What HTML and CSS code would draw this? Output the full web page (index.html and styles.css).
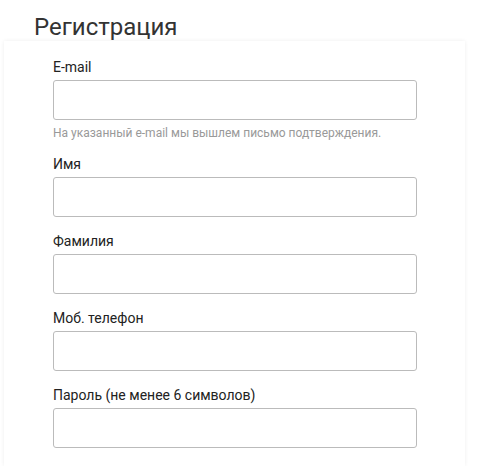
FILE: index.html
```html
<!DOCTYPE html>
<html lang="ru">
<head>
  <meta charset="UTF-8">
  <title>Регистрация</title>
  <link rel="stylesheet" href="styles.css">
</head>
<body>

  <div class="page">
    <h1 class="title">Регистрация</h1>

    <form class="card" id="regForm">
      <div class="form-group">
        <label for="email">E-mail</label>
        <input type="text" id="email" name="email">
        <p class="hint">На указанный e-mail мы вышлем письмо подтверждения.</p>
      </div>

      <div class="form-group">
        <label for="name">Имя</label>
        <input type="text" id="name" name="name">
      </div>

      <div class="form-group">
        <label for="surname">Фамилия</label>
        <input type="text" id="surname" name="surname">
      </div>

      <div class="form-group">
        <label for="phone">Моб. телефон</label>
        <input type="text" id="phone" name="phone">
      </div>

      <div class="form-group">
        <label for="password">Пароль (не менее 6 символов)</label>
        <input type="password" id="password" name="password">
      </div>
    </form>
  </div>

</body>
</html>
```

FILE: styles.css
```css
body {
  font-family: Roboto, 'Liberation Sans', sans-serif;
  background-color: #fff;
  margin: 0;
  padding: 0;
}

.page {
  padding: 14px 28px 0 4px;
}

.title {
  margin: 0 0 1px 30px;
  font-size: 24px;
  line-height: 26px;
  font-weight: normal;
  color: #333;
}

.card {
  background-color: #fff;
  padding: 18px 48px 2px 49px;
  box-shadow: 0 0 4px rgba(0, 0, 0, 0.07);
}

.form-group {
  margin-bottom: 16px;
}

label {
  display: block;
  font-size: 14px;
  line-height: 17px;
  color: #222;
  margin-bottom: 4px;
}

input[type="text"], input[type="password"] {
  display: block;
  box-sizing: border-box;
  width: 364px;
  height: 40px;
  margin: 0;
  padding: 6px 10px;
  border: 1px solid #bbb;
  border-radius: 3px;
  background-color: #fff;
  font-family: inherit;
  font-size: 14px;
}

.hint {
  margin: 6px 0 -1px;
  font-size: 12px;
  line-height: 15px;
  color: #999;
}
```
